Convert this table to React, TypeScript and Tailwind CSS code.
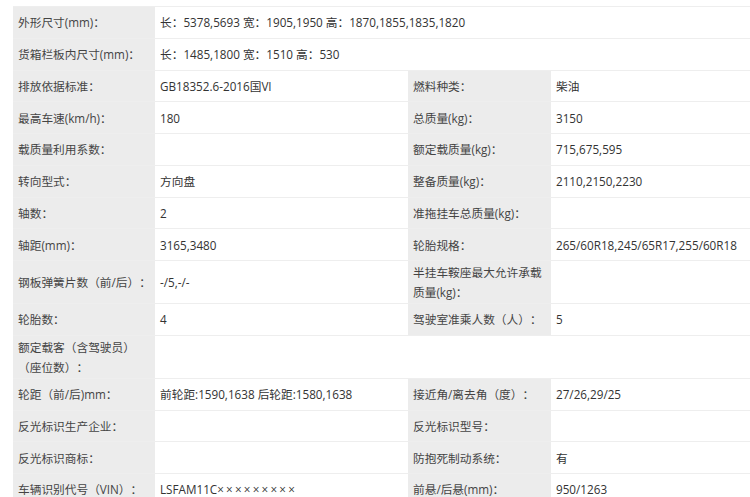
import React from "react";

type Row = { l: string; v: React.ReactNode; l2?: string; v2?: string; full?: boolean };

const rows: Row[] = [
  { l: "外形尺寸(mm)：", v: "长：5378,5693 宽：1905,1950 高：1870,1855,1835,1820", full: true },
  { l: "货箱栏板内尺寸(mm)：", v: "长：1485,1800 宽：1510 高：530", full: true },
  { l: "排放依据标准：", v: "GB18352.6-2016国VI", l2: "燃料种类：", v2: "柴油" },
  { l: "最高车速(km/h)：", v: "180", l2: "总质量(kg)：", v2: "3150" },
  { l: "载质量利用系数：", v: "", l2: "额定载质量(kg)：", v2: "715,675,595" },
  { l: "转向型式：", v: "方向盘", l2: "整备质量(kg)：", v2: "2110,2150,2230" },
  { l: "轴数：", v: "2", l2: "准拖挂车总质量(kg)：", v2: "" },
  { l: "轴距(mm)：", v: "3165,3480", l2: "轮胎规格：", v2: "265/60R18,245/65R17,255/60R18" },
  { l: "钢板弹簧片数（前/后）：", v: "-/5,-/-", l2: "半挂车鞍座最大允许承载质量(kg)：", v2: "" },
  { l: "轮胎数：", v: "4", l2: "驾驶室准乘人数（人）：", v2: "5" },
  { l: "额定载客（含驾驶员）（座位数）：", v: "", full: true },
  { l: "轮距（前/后)mm：", v: "前轮距:1590,1638 后轮距:1580,1638", l2: "接近角/离去角（度）：", v2: "27/26,29/25" },
  { l: "反光标识生产企业：", v: "", l2: "反光标识型号：", v2: "" },
  { l: "反光标识商标：", v: "", l2: "防抱死制动系统：", v2: "有" },
  {
    l: "车辆识别代号（VIN）：",
    v: (
      <span>
        LSFAM11C<span className="tracking-[2.2px]">×××××××××</span>
      </span>
    ),
    l2: "前悬/后悬(mm)：",
    v2: "950/1263",
  },
];

const labelCls = "bg-[#ececec] pl-[5px] pr-[1px] py-[1px] flex items-center text-[#444]";
const valueCls = "bg-white px-[5px] py-[1px] flex items-center text-[#333]";

export default function App() {
  return (
    <div
      className="w-[750px] h-[497px] overflow-hidden bg-white pt-[6px] pl-[13px] text-[11.7px] leading-[20px] [text-spacing-trim:space-all]"
      style={{ fontFamily: '"Open Sans", "Noto Sans CJK SC", sans-serif' }}
    >
      <div className="border-t border-[#eeeeee]">
        {rows.map((r, i) => (
          <div
            key={i}
            className="grid grid-cols-[142px_253px_143px_1fr] min-h-[31.75px] border-b border-[#eeeeee]"
          >
            <div className={labelCls}>{r.l}</div>
            {r.full ? (
              <div className={valueCls + " col-span-3"}>{r.v}</div>
            ) : (
              <>
                <div className={valueCls}>{r.v}</div>
                <div className={labelCls}>{r.l2}</div>
                <div className={valueCls}>{r.v2}</div>
              </>
            )}
          </div>
        ))}
      </div>
    </div>
  );
}
